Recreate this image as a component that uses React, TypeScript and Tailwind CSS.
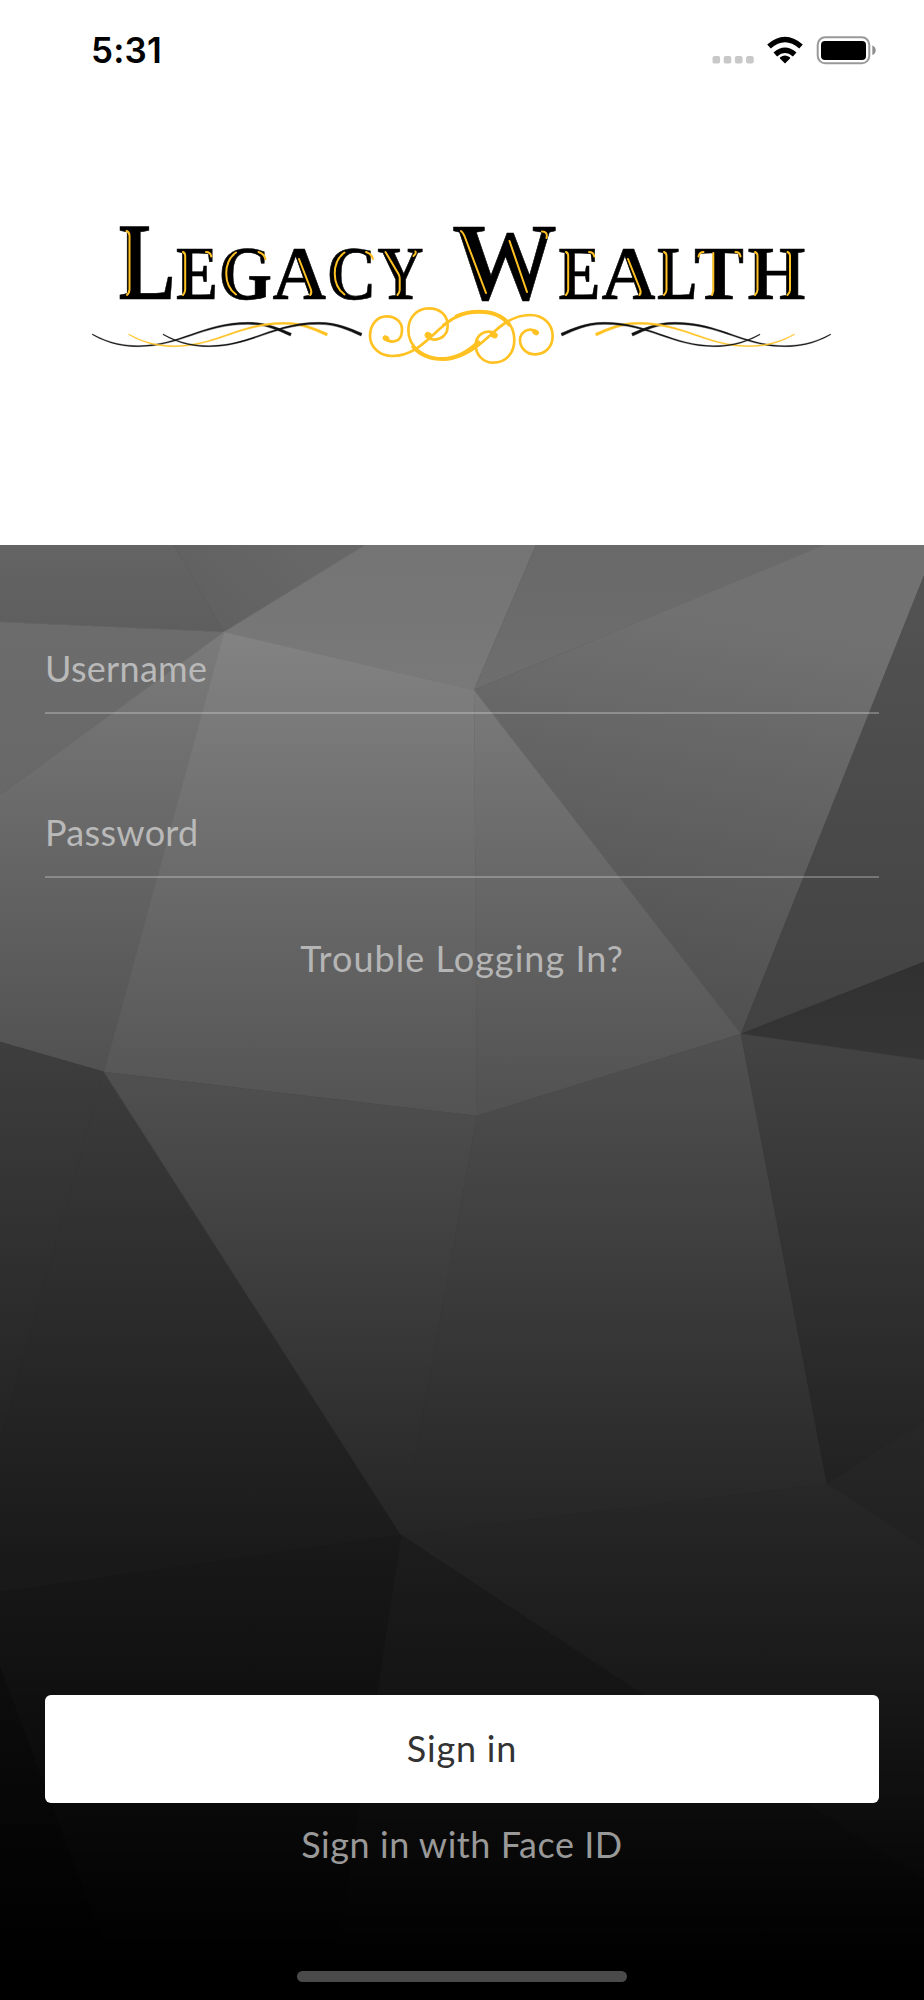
import { useState } from 'react'

type Facet = {
  points: string
  from: string
  to: string
  y1: number
  y2: number
  x1?: number
  x2?: number
}

// low poly backdrop, coordinates are relative to the panel (924 x 1455)
const facets: Facet[] = [
  { points: '0,0 174,0 224,87 0,77', from: '#646464', to: '#5e5e5e', y1: 0, y2: 87 },
  { points: '174,0 365,0 224,87', from: '#676767', to: '#606060', y1: 0, y2: 87, x1: 300, x2: 200 },
  { points: '365,0 536,0 474,145 224,87', from: '#747474', to: '#797979', y1: 0, y2: 145 },
  { points: '536,0 824,0 474,145', from: '#696969', to: '#6e6e6e', y1: 0, y2: 145 },
  { points: '824,0 924,0 924,31 741,489 474,145', from: '#717171', to: '#4e4e4e', y1: 80, y2: 500, x1: 760, x2: 690 },
  { points: '924,31 924,417 741,489', from: '#525252', to: '#424242', y1: 60, y2: 480 },
  { points: '741,489 924,417 924,515', from: '#313131', to: '#353535', y1: 417, y2: 515 },
  { points: '0,77 224,87 0,250', from: '#6c6c6c', to: '#686868', y1: 77, y2: 250 },
  { points: '0,250 224,87 104,527 0,497', from: '#7b7b7b', to: '#515151', y1: 87, y2: 527 },
  { points: '224,87 474,145 477,571 104,527', from: '#828282', to: '#535353', y1: 95, y2: 571 },
  { points: '474,145 741,489 477,571', from: '#7a7a7a', to: '#515151', y1: 145, y2: 571 },
  { points: '0,497 104,527 0,895', from: '#3e3e3e', to: '#232323', y1: 497, y2: 895 },
  { points: '104,527 401,990 0,1047 0,895', from: '#3c3c3c', to: '#191919', y1: 527, y2: 1020 },
  { points: '104,527 477,571 401,990', from: '#4f4f4f', to: '#252525', y1: 540, y2: 990 },
  { points: '477,571 741,489 827,939 401,990', from: '#505050', to: '#262626', y1: 500, y2: 980 },
  { points: '741,489 924,515 924,876 827,939', from: '#434343', to: '#212121', y1: 495, y2: 939 },
  { points: '827,939 924,876 924,1003', from: '#272727', to: '#212121', y1: 880, y2: 1003 },
  { points: '827,939 924,1003 924,1455 1100,1455 642,1149 401,990', from: '#282828', to: '#181818', y1: 939, y2: 1149 },
  { points: '401,990 642,1149 924,1335 924,1455 330,1455', from: '#1d1d1d', to: '#141414', y1: 990, y2: 1149 },
  { points: '0,1047 401,990 330,1455 125,1455 0,1122', from: '#191919', to: '#101010', y1: 990, y2: 1149 },
  { points: '0,1122 125,1455 0,1455', from: '#0d0d0d', to: '#0b0b0b', y1: 1122, y2: 1300 },
]

function Backdrop() {
  return (
    <svg className="absolute inset-0 h-full w-full" viewBox="0 0 924 1455" preserveAspectRatio="none" aria-hidden="true">
      <defs>
        {facets.map((f, i) => (
          <linearGradient key={i} id={`facet-${i}`} gradientUnits="userSpaceOnUse" x1={f.x1 ?? 0} x2={f.x2 ?? 0} y1={f.y1} y2={f.y2}>
            <stop offset="0" stopColor={f.from} />
            <stop offset="1" stopColor={f.to} />
          </linearGradient>
        ))}
        <linearGradient id="fade" x1="0" x2="0" y1="0" y2="1">
          <stop offset="0" stopColor="#000" stopOpacity="0" />
          <stop offset="1" stopColor="#000" stopOpacity="1" />
        </linearGradient>
      </defs>
      <rect width="924" height="1455" fill="#0c0c0c" />
      {facets.map((f, i) => (
        <polygon key={i} points={f.points} fill={`url(#facet-${i})`} stroke={`url(#facet-${i})`} strokeWidth="0.6" />
      ))}
      <rect y="1140" width="924" height="280" fill="url(#fade)" />
      <rect y="1419" width="924" height="36" fill="#000" />
    </svg>
  )
}

function StatusBar() {
  return (
    <div className="flex h-[100px] items-center justify-between pr-[47px] pl-[91px]">
      <span className="pt-px font-[Inter,sans-serif] text-[35px] leading-none font-semibold tracking-[0.2px] text-black">5:31</span>
      <svg width="166" height="30" viewBox="711 35 166 30" aria-hidden="true">
        <g fill="#c8c8c8">
          <rect x="712.5" y="56" width="7.6" height="7.6" rx="2" />
          <rect x="723.7" y="56" width="7.6" height="7.6" rx="2" />
          <rect x="734.9" y="56" width="7.6" height="7.6" rx="2" />
          <rect x="746.1" y="56" width="7.6" height="7.6" rx="2" />
        </g>
        <path d="M785 63.5l-5-5q-.6-.8.2-1.3q4.8-3.3 9.6 0q.8.5.2 1.3z" />
        <g fill="none" stroke="#000" strokeWidth="5.4">
          <path d="M775.3 54.5Q785 46 794.7 54.5" />
          <path d="M769 46.5Q785 32.5 801 46.5" />
        </g>
        <rect x="817.7" y="37.3" width="51.6" height="26" rx="7.5" fill="none" stroke="#999" strokeWidth="2" />
        <rect x="821" y="41" width="45" height="19" rx="4" />
        <path d="M872.3 45.5q3.4 1.4 3.4 4.8t-3.4 4.8z" fill="#8e8e8e" />
      </svg>
    </div>
  )
}

const letters = [
  { c: 'L', x: 118.5, w: 57, big: true },
  { c: 'E', x: 176, w: 42 },
  { c: 'G', x: 218.5, w: 53.5 },
  { c: 'A', x: 272.5, w: 53.5 },
  { c: 'C', x: 326.5, w: 50 },
  { c: 'Y', x: 377, w: 46.5 },
  { c: ' ', x: 424, w: 20 },
  { c: 'W', x: 452, w: 105, big: true },
  { c: 'E', x: 558.5, w: 42 },
  { c: 'A', x: 601.5, w: 54 },
  { c: 'L', x: 657, w: 40 },
  { c: 'T', x: 694, w: 50 },
  { c: 'H', x: 747.5, w: 58 },
]

const swash =
  'M37 372C90 401 135 407 175 407C300 407 370 337 505 337C560 337 600 356 634 370L631 378C590 360 560 344 505 343C370 342 300 410 175 410C135 410 90 404 37 374Z'

function Swashes() {
  return (
    <g transform="translate(80 210) scale(.33333)" strokeWidth="1.2">
      <path d={swash} fill="#111" stroke="#111" />
      <path d={swash} fill="#ffc222" stroke="#ffc222" transform="translate(109 0)" />
      <path d={swash} fill="#111" stroke="#111" transform="translate(212 0)" />
    </g>
  )
}

function Logo() {
  return (
    <svg className="h-[200px] w-[760px]" viewBox="82 170 760 200" role="img" aria-label="Legacy Wealth">
      <text y="299" fontFamily="'Liberation Serif', serif" fontWeight="700" fill="#000" stroke="#000" strokeWidth="0.6">
        {letters.map((l, i) => (
          <tspan key={i} x={l.x} fontSize={l.big ? 110 : 77} textLength={l.w} lengthAdjust="spacingAndGlyphs">
            {l.c}
          </tspan>
        ))}
      </text>
      {/* gold inlines */}
      <g fill="none" stroke="#ffc222" strokeWidth="2" strokeLinecap="round">
        <path d="M126.5 231Q129.500 232 129.500 236V289Q129.500 293 127 295" />
        <path d="M183 252Q185.200 253 185.200 256V290Q185 293 183 295M206 252Q210.500 252 211.300 256.500" />
        <path d="M236 252.500C223 262 223 285 236 294.500M258.500 252Q264.500 254 265.500 259" />
        <path d="M299 259L310.700 289Q312.200 293 310.200 295" />
        <path d="M344.500 252.500C331.500 262 331.500 285 344.500 294.500M366 252Q372 254 373 259" />
        <path d="M385.500 252L398.500 274Q399.700 276 399.700 279V290Q399.500 293 397.500 295M415.500 251.500Q416.500 253.500 413.500 256" />
        <path d="M461 231Q463 232.500 464.500 236L486 293M509.500 241L527 292M542 231.500Q548 231.500 546.500 238" />
        <path d="M566 252Q568.200 253 568.200 256V290Q568 293 566 295M589 252Q593.500 252 594.300 256.500" />
        <path d="M628 259L640 289Q641.500 293 639.500 295" />
        <path d="M664 252Q666.500 253 666.500 256V290Q666.300 293 664 295" />
        <path d="M698.500 256.500Q699.500 252 703.500 252M713.300 253V291L712 295M735.500 252Q740 252 740.500 256.500" />
        <path d="M755 252Q757.500 253 757.500 256V290Q757.300 293 755 295M787.500 252Q790 253 790 256V290Q789.800 293 787.500 295" />
      </g>
      <Swashes />
      <g transform="translate(923 0) scale(-1 1)">
        <Swashes />
      </g>
      <g transform="translate(80 210) scale(.33333)" fill="none" stroke="#ffc222" strokeWidth="8" strokeLinecap="round">
        <path d="M914 384C930 401 966 400 966 359C966 335 946 319 920 319C890 319 870 345 870 378C870 412 900 438 936 438C1020 438 1060 360 1120 326" />
        <path d="M1090 345C1130 314 1165 305 1198 305C1265 305 1303 340 1303 390C1303 430 1277 458 1240 458C1210 458 1187 435 1187 405C1187 378 1212 358 1238 367" />
        <path d="M1040 380C1060 397 1103 388 1103 347C1103 315 1080 295 1046 295C1010 295 985 324 985 360C985 410 1030 447 1090 447C1180 447 1230 365 1280 336C1305 321 1325 315 1350 315C1390 315 1418 342 1418 378C1418 411 1395 433 1366 433C1340 433 1320 414 1320 390C1320 368 1345 350 1367 364" />
        <path d="M1000 410C1020 434 1050 447 1090 447C1130 447 1165 425 1195 397M1130 319C1150 309 1175 305 1198 305C1240 305 1270 320 1287 343" strokeWidth="12" />
        <g fill="#ffc222" strokeWidth="3">
          <ellipse cx="918" cy="385" rx="9" ry="7" transform="rotate(30 918 385)" />
          <ellipse cx="1045" cy="376" rx="10" ry="8" transform="rotate(30 1045 376)" />
          <ellipse cx="1242" cy="375" rx="10" ry="8" transform="rotate(30 1242 375)" />
          <ellipse cx="1367" cy="367" rx="9" ry="7" transform="rotate(30 1367 367)" />
        </g>
      </g>
    </svg>
  )
}

function Field({ label }: { label: string }) {
  return (
    <label className="flex h-[92px] items-start border-b-2 border-white/25 pt-[24px] text-[36px] leading-[44px] tracking-[0.3px] text-[#b9b9b9]">
      {label}
    </label>
  )
}

export default function App() {
  const [faceId, setFaceId] = useState(false)

  return (
    <main className="flex h-[2000px] w-[924px] flex-col overflow-hidden bg-white font-[Lato,sans-serif]">
      <header className="h-[545px]">
        <StatusBar />
        <div className="flex justify-center pt-[70px]">
          <Logo />
        </div>
      </header>

      <section className="relative h-[1455px] bg-black">
        <Backdrop />
        <div className="relative flex h-full flex-col px-[45px]">
          <div className="flex flex-col gap-[72px] pt-[77px]">
            <Field label="Username" />
            <Field label="Password" />
          </div>
          <button type="button" className="mt-[58px] text-center text-[36px] leading-[44px] tracking-[1.05px] text-[#b5b5b5]">
            Trouble Logging In?
          </button>

          <div className="mt-auto flex flex-col items-center">
            <button type="button" className="h-[108px] w-full rounded-md bg-white pb-[2px] text-[36px] leading-[44px] tracking-[0.8px] text-[#333]">
              Sign in
            </button>
            <button
              type="button"
              onClick={() => setFaceId(!faceId)}
              className="mt-[19px] text-[36px] leading-[44px] tracking-[0.55px] text-[#999]"
            >
              Sign in with Face ID
            </button>
            <div className="mt-[105px] mb-[18px] h-[11px] w-[330px] rounded-full bg-[#4a4a4a]" />
          </div>
        </div>
      </section>
    </main>
  )
}
